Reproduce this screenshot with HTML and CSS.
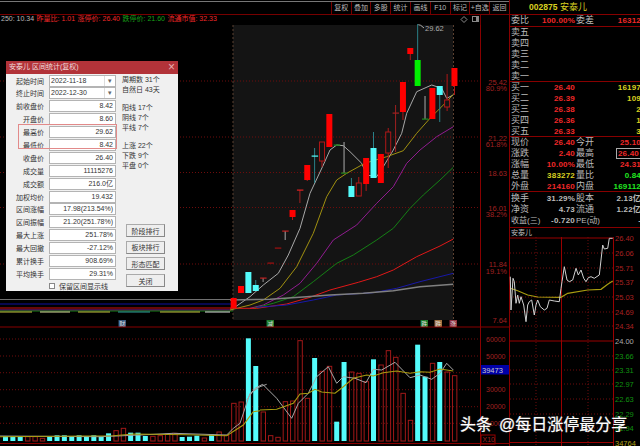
FILE: index.html
```html
<!DOCTYPE html>
<html lang="zh-CN">
<head>
  <meta charset="UTF-8">
  <title>安泰儿 002875</title>
  <link rel="stylesheet" href="styles.css">
</head>
<body>
  <div class="screen">
    <div class="left">
      <div class="toolbar">
        <span>复权</span><span>叠加</span><span>多股</span><span>统计</span><span>画线</span><span>F10</span><span>标记</span><span>+自选</span><span>返回</span>
      </div>
      <div class="info">
        <span class="gray">250: 10.34</span>
        <span class="red">昨量比: 1.01</span>
        <span class="red">涨停价: 26.40</span>
        <span class="green">跌停价: 21.60</span>
        <span class="red">流通市值: 32.33</span>
      </div>
      <svg id="kline" class="kline" viewBox="0 25 509 421" width="509" height="421"></svg>
    </div>

    <div class="quote">
      <div class="stock"><b>002875</b> 安泰儿</div>
      <div class="block one">
        <div class="row"><i>委比</i><b class="red">100.00%</b><i>委差</i><b class="red">16312</b></div>
      </div>
      <div class="block">
        <div class="row"><i>卖五</i></div>
        <div class="row"><i>卖四</i></div>
        <div class="row"><i>卖三</i></div>
        <div class="row"><i>卖二</i></div>
        <div class="row"><i>卖一</i></div>
      </div>
      <div class="block">
        <div class="row"><i>买一</i><b class="red">26.40</b><i></i><b class="yellow">16197</b></div>
        <div class="row"><i>买二</i><b class="red">26.39</b><i></i><b class="yellow">109</b></div>
        <div class="row"><i>买三</i><b class="red">26.38</b><i></i><b class="yellow">2</b></div>
        <div class="row"><i>买四</i><b class="red">26.36</b><i></i><b class="yellow">1</b></div>
        <div class="row"><i>买五</i><b class="red">26.33</b><i></i><b class="yellow">3</b></div>
      </div>
      <div class="block">
        <div class="row"><i>现价</i><b class="red">26.40</b><i>今开</i><b class="red">25.10</b></div>
        <div class="row"><i>涨跌</i><b class="red">2.40</b><i>最高</i><b class="red"><span class="boxed">26.40</span></b></div>
        <div class="row"><i>涨幅</i><b class="red">10.00%</b><i>最低</i><b class="red">24.31</b></div>
        <div class="row"><i>总量</i><b class="yellow">383272</b><i>量比</i><b class="lime">0.84</b></div>
        <div class="row"><i>外盘</i><b class="red">214160</b><i>内盘</i><b class="lime">169112</b></div>
      </div>
      <div class="block three">
        <div class="row"><i>换手</i><b>31.29%</b><i>股本</i><b>2.13亿</b></div>
        <div class="row"><i>净资</i><b>4.73</b><i>流通</i><b>1.22亿</b></div>
        <div class="row wide"><i>收益(三)</i><b>-0.720</b><i>PE(动)</i><b>-</b></div>
      </div>
      <div class="minute-title">安泰儿</div>
      <svg id="minute" class="minute" viewBox="509 237 131 209" width="131" height="209"></svg>
    </div>

    <div class="dialog">
      <div class="dialog-title"><span>安泰儿 区间统计(复权)</span><span class="close">×</span></div>
      <div class="dialog-body">
        <div class="form">
          <div class="field"><label>起始时间</label><div class="value date">2022-11-18<em>▾</em></div></div>
          <div class="field"><label>终止时间</label><div class="value date">2022-12-30<em>▾</em></div></div>
          <div class="field"><label>前收盘价</label><div class="value">8.42</div></div>
          <div class="field"><label>开盘价</label><div class="value">8.60</div></div>
          <div class="field"><label>最高价</label><div class="value">29.62</div></div>
          <div class="field"><label>最低价</label><div class="value">8.42</div></div>
          <div class="field"><label>收盘价</label><div class="value">26.40</div></div>
          <div class="field"><label>成交量</label><div class="value">11115276</div></div>
          <div class="field"><label>成交额</label><div class="value">216.0亿</div></div>
          <div class="field"><label>加权均价</label><div class="value">19.432</div></div>
          <div class="field"><label>区间涨幅</label><div class="value">17.98(213.54%)</div></div>
          <div class="field"><label>区间振幅</label><div class="value">21.20(251.78%)</div></div>
          <div class="field"><label>最大上涨</label><div class="value">251.78%</div></div>
          <div class="field"><label>最大回撤</label><div class="value">-27.12%</div></div>
          <div class="field"><label>累计换手</label><div class="value">908.69%</div></div>
          <div class="field"><label>平均换手</label><div class="value">29.31%</div></div>
          <div class="keep"><span class="check"></span>保留区间显示线</div>
        </div>
        <div class="side">
          <div class="stats"><p>周期数 31个</p><p>自然日 43天</p></div>
          <div class="stats"><p>阳线 17个</p><p>阴线 7个</p><p>平线 7个</p></div>
          <div class="stats"><p>上涨 22个</p><p>下跌 9个</p><p>平盘 0个</p></div>
          <div class="buttons">
            <button>阶段排行</button>
            <button>板块排行</button>
            <button>形态匹配</button>
            <button>关闭</button>
          </div>
        </div>
      </div>
      <div class="highlight"></div>
    </div>

    <div class="watermark">头条 @每日涨停最分享</div>
  </div>
  <script src="chart.js"></script>
</body>
</html>
```

FILE: styles.css
```css
* { box-sizing: border-box; }
html, body { margin: 0; background: #000; }
body { font-family: "Liberation Sans", "Noto Sans CJK SC", sans-serif; font-size: 10px; color: #bbb; }
svg { display: block; overflow: visible; }
svg text { font-family: "Liberation Sans", "Noto Sans CJK SC", sans-serif; }

.screen { position: relative; width: 640px; height: 446px; overflow: hidden; display: grid; grid-template-columns: 509px 131px; }
.red { color: #f02828; }
.green { color: #18a018; }
.gray { color: #b8b8b8; }
.yellow { color: #d8d020; }
.lime { color: #20e820; }

.toolbar { height: 14px; margin-top: 1px; border-top: 1px solid #777; border-bottom: 1px solid #700; display: flex; justify-content: flex-end; }
.toolbar span { width: 19.8px; line-height: 11px; text-align: center; border-left: 1px solid #700; font-size: 7px; white-space: nowrap; overflow: hidden; }
.info { height: 10px; width: 481px; border-right: 1px solid #700; padding-left: 1px; display: flex; gap: 2.5px; line-height: 8px; font-size: 7px; white-space: nowrap; }

.quote { border-left: 1px solid #800; display: flex; flex-direction: column; min-height: 0; }
.stock { height: 15px; padding: 2px 0 0 19px; line-height: 11px; color: #d8d020; border-bottom: 1px solid #800; font-size: 9px; }
.stock b { font-size: 8.5px; }
.block { height: 55px; border-bottom: 1px solid #800; }
.block.one { height: 12px; }
.block.three { height: 36px; padding-top: 1px; }
.row { height: 11px; line-height: 11px; display: grid; grid-template-columns: 19px 46px 20px 46px; white-space: nowrap; overflow: hidden; font-size: 8px; }
.row.wide { grid-template-columns: 28px 37px 20px 46px; }
.row i { font-style: normal; padding-left: 1px; font-size: 9px; color: #bbb; }
.row.wide i { font-size: 8px; }
.row b { text-align: right; letter-spacing: 0.2px; }
.boxed { border: 1px solid #aaa; padding: 0 1px; }
.minute-title { height: 9px; line-height: 9px; font-size: 7px; padding-left: 1px; }

.dialog { position: absolute; left: 6px; top: 61px; width: 172px; height: 230px; background: #f0f0f0; color: #333; }
.dialog-title { height: 13px; background: #b23339; color: #f0dcdc; padding: 0 3px; line-height: 12px; font-size: 7px; display: flex; justify-content: space-between; }
.close { font-size: 12px; color: #e8b0b0; }
.dialog-body { display: flex; }
.form { width: 110px; padding-top: 0.5px; display: flex; flex-direction: column; gap: 0.9px; }
.field { height: 12px; display: flex; align-items: center; }
.field label { width: 38px; margin-right: 5px; text-align: right; font-size: 7px; white-space: nowrap; }
.value { width: 67px; height: 12px; background: #fff; border: 1px solid #b4b4b4; line-height: 10px; text-align: right; padding-right: 2px; font-size: 7px; white-space: nowrap; }
.value.date { display: flex; justify-content: space-between; padding: 0 0 0 1px; }
.value em { width: 11px; border-left: 1px solid #ddd; font-style: normal; text-align: center; color: #666; font-size: 7px; }
.keep { height: 12px; margin: -1px 0 0 43px; display: flex; align-items: center; gap: 4px; font-size: 7px; white-space: nowrap; }
.check { width: 6px; height: 6px; background: #fff; border: 1px solid #888; flex: none; }
.side { margin-left: 6px; display: flex; flex-direction: column; font-size: 7px; flex: 1; }
.stats { margin-bottom: 8.8px; }
.stats:first-child { padding-top: 1px; }
.stats p { margin: 0; line-height: 9.7px; white-space: nowrap; }
.buttons { margin: 45px 0 0 4px; display: flex; flex-direction: column; gap: 3.7px; }
.buttons button { width: 39px; height: 13px; padding: 0; font: inherit; color: #333; background: #eee; border: 1px solid #aaa; border-bottom-color: #888; border-right-color: #888; }
.highlight { position: absolute; left: 12px; top: 63px; width: 99px; height: 25px; border: 1px solid #e28a8a; }

.watermark { position: absolute; left: 460px; top: 415px; font-size: 16px; line-height: 20px; word-spacing: 2.5px; color: #fff; white-space: nowrap; text-shadow: 0 0 2px #333; -webkit-text-stroke: 0.2px #fff; }
```

FILE: chart.js
```js
// k-line, volume and minute chart
const RED = '#ff0000', CYAN = '#54fcfc', TEAL = '#2a8088', DIM = '#6e0c0c', AXIS = '#a02020';
const barX = i => 5.5 + i * 7.36;

function line(x1, y1, x2, y2, color, extra) {
  return `<line x1="${x1}" y1="${y1}" x2="${x2}" y2="${y2}" stroke="${color}" ${extra || ''}/>`;
}
function rect(x, y, w, h, fill, stroke) {
  return `<rect x="${x}" y="${y}" width="${w}" height="${h}" fill="${fill}" stroke="${stroke || 'none'}"/>`;
}
function text(x, y, s, color, size, anchor) {
  return `<text x="${x}" y="${y}" fill="${color}" font-size="${size || 7}" text-anchor="${anchor || 'start'}">${s}</text>`;
}
// points were read off at 3x, ox/oy is where that crop started
function poly(pts, ox, oy, color, w) {
  const p = pts.map(a => `${(ox + a[0] / 3).toFixed(1)},${(oy + a[1] / 3).toFixed(1)}`).join(' ');
  return `<polyline points="${p}" fill="none" stroke="${color}" stroke-width="${w || 1}"/>`;
}

// index, type, high, low, top, bottom
// r filled red, h hollow red, c cyan, g green
const candles = [
  [31, 'r', 298, 308, 298, 308], [32, 'r', 286, 293, 286, 293], [33, 'c', 272, 293, 272, 293],
  [34, 'c', 280, 291, 285, 291], [39, 'r', 210, 220, 210, 217], [41, 'r', 165, 181, 165, 180],
  [43, 'h', 142, 167, 142, 161], [44, 'r', 114, 147, 114, 147], [47, 'c', 178, 197, 186, 197],
  [48, 'h', 177, 196, 183, 196], [49, 'r', 158, 191, 158, 184], [50, 'c', 132, 178, 148, 178],
  [51, 'r', 154, 183, 154, 183], [52, 'h', 128, 168, 132, 153], [54, 'r', 82, 120, 82, 112],
  [55, 'r', 48, 60, 48, 54], [56, 'g', 24, 86, 60, 86], [58, 'r', 88, 119, 88, 119],
  [59, 'c', 86, 122, 86, 95], [60, 'h', 74, 111, 100, 107], [61, 'r', 68, 95, 68, 86]
];
// index, y, bar colour, stem end, stem colour
const ticks = [
  [35, 278, '#c02020', 282, '#999'], [36, 263, '#a01010'], [37, 248, '#a01010'],
  [38, 231, '#c02020', 240, '#aaa'], [40, 190, '#e02020', 203, '#a02020'],
  [42, 156, CYAN, 183, TEAL, 148], [45, 145, '#1c8c1c'], [46, 173, '#1c8c1c', 142, '#aaa'],
  [53, 113, '#a02020', 152, '#a02020', 105], [57, 119, '#1c8c1c', 96, '#aaa']
];

const ma = [
  ['#a8a8a8', [[10,925],[60,890],[100,855],[145,820],[175,765],[210,685],[240,580],[280,495],[300,450],[320,435],[340,437],[360,455],[395,490],[410,525],[440,530],[460,500],[490,450],[515,400],[530,340],[560,275],[605,255],[635,265],[650,295],[670,285]]],
  ['#a09010', [[0,930],[60,915],[100,900],[150,865],[200,800],[250,700],[290,590],[320,540],[350,520],[395,495],[420,485],[470,470],[520,452],[560,400],[600,355],[630,325],[650,305],[670,283]]],
  ['#901c90', [[60,925],[100,915],[160,885],[210,850],[260,790],[310,720],[380,675],[440,610],[490,560],[530,490],[570,450],[620,410],[670,380]]],
  ['#148014', [[70,925],[130,910],[190,890],[250,845],[320,790],[370,765],[440,720],[490,685],[540,625],[580,585],[630,540],[670,502]]],
  ['#e01818', [[0,925],[80,925],[170,912],[240,892],[300,870],[385,847],[440,830],[490,810],[560,770],[630,738],[670,717]]],
  ['#1818a8', [[80,922],[170,915],[250,900],[320,885],[430,878],[500,865],[570,845],[670,820]]],
  ['#808080', [[0,900],[120,898],[230,890],[300,885],[400,880],[490,872],[570,860],[670,853]]]
];

const vols = [
  348,350,350,350,350,355,351,346,346,351,346,350,346,350,340,332,325,338,338,348,349,347,342,340,351,350,347,354,344,336,346,250,246,55,138,
  276,347,352,245,243,62,235,114,154,139,305,126,156,160,185,118,135,92,112,220,301,74,170,130,126,156,167
];
const cyanBars = new Set([0,1,2,6,7,8,9,10,11,12,13,14,17,18,19,24,25,26,28,33,34,42,45,46,50,56,57,59]);

function klineSvg() {
  let s = '';
  s += rect(233, 25, 220, 295, '#141414');
  [81, 137, 172.5, 207.5, 264].forEach(y => { s += line(0, y, 480, y, DIM, 'stroke-dasharray="1 2"'); });
  s += line(233, 25, 233, 320, '#5a4030', 'stroke-dasharray="2 2"');
  s += line(453.5, 25, 453.5, 320, '#5a4030', 'stroke-dasharray="2 2"');

  // lines that run on under the dialog
  s += line(0, 299.5, 233, 299.5, '#707070');
  s += line(0, 304, 233, 304, '#1010a0');
  s += line(0, 308, 233, 308, '#d01010');
  s += line(0, 310, 233, 310, '#901c90');
  s += line(0, 311, 233, 311, '#148014');
  [[0, 32, '#c8c040'], [40, 70, '#e0e0a0'], [78, 110, '#c8c040'], [118, 150, '#30a0a0'], [160, 200, '#c8c040'], [205, 230, '#e0e0e0']].forEach(g => {
    s += line(g[0], 312, g[1], 312, g[2]);
  });
  ma.forEach(m => { s += poly(m[1], 230, 0, m[0], m[0] === '#808080' ? 1.5 : 1); });

  candles.forEach(c => {
    const x = barX(c[0]), col = c[1] === 'c' ? CYAN : c[1] === 'g' ? '#00f000' : RED;
    const wick = c[1] === 'c' || c[1] === 'g' ? TEAL : '#b01818';
    s += line(x, c[2], x, c[3], wick);
    if (c[1] === 'h') s += rect(x - 2.5, c[4], 5, c[5] - c[4], '#141414', '#b01818');
    else s += rect(x - 3, c[4], 6, c[5] - c[4], col);
  });
  ticks.forEach(t => {
    const x = barX(t[0]);
    if (t[3]) s += line(x, t[5] || t[1], x, t[3], t[4]);
    s += rect(x - 3, t[1] - 0.5, 6.5, 1.2, t[2]);
  });

  s += poly([[565,74],[572,76],[582,84]], 230, 0, '#aaa');
  s += text(425, 31, '29.62', '#aaa', 7.5);
  s += `<path d="M464 16.5l3 3-3 3-3-3z" fill="none" stroke="#888"/>`;
  s += rect(472.5, 16.5, 6, 5, 'none', '#888') + rect(476, 16.5, 2.5, 5, '#888');

  // marks under the candles
  [[122, '财', '#3a5a80'], [270, '减', '#1c7c2c'], [424, '跌', '#1c7c2c'], [438, '跌', '#a07040'], [453, '涨', '#903040']].forEach(m => {
    s += rect(m[0] - 3.5, 320, 7.5, 7, m[2]);
    s += text(m[0] + 0.2, 326, m[1], '#ddd', 6, 'middle');
  });

  // right axis
  [[84.5, '25.42', 91, '80.9%'], [140.5, '21.22', 147, '61.8%'], [175.5, '18.63'], [210.5, '16.01', 217, '38.2%'], [267, '11.84', 273.5, '19.1%'], [323, '7.64']].forEach(a => {
    s += text(507, a[0], a[1], AXIS, 7.5, 'end');
    if (a[2]) s += text(507, a[2], a[3], AXIS, 7.5, 'end');
  });
  s += line(480.5, 25, 480.5, 446, '#800');
  s += line(0, 327, 509, 327, '#800');

  // volume
  [339, 356, 372.7, 389.7, 406.7, 423.3].forEach((y, i) => {
    s += line(0, y, 480, y, DIM, 'stroke-dasharray="1 2"');
    if (i !== 2) s += text(486, y + 2.5, (60000 - i * 10000), AXIS, 7);
  });
  vols.forEach((v, i) => {
    const x = 3 + i * 7.36, top = 320 + v / 3;
    if (cyanBars.has(i)) s += rect(x, top, 5, 441 - top, CYAN);
    else s += rect(x + 0.5, top, 4.4, 441 - top, 'none', '#a01818');
  });
  s += poly([[0,348],[300,350],[420,345],[520,340],[680,345],[700,325],[720,310],[750,220],[780,200],[800,193]], 0, 320, '#a0a0a0');
  s += poly([[20,240],[45,205],[68,193],[110,235],[155,295],[175,250],[205,220],[230,170],[265,140],[290,190],[310,170],[345,175],[378,188],[400,148],[425,150],[465,127],[510,173],[540,165],[575,178],[600,160],[620,130],[640,150]], 240, 320, '#a8a8a8');
  s += poly([[0,350],[340,347],[400,342],[560,344],[680,347],[730,315],[760,275],[780,272]], 0, 320, '#a89c10', 1.1);
  s += poly([[60,270],[110,268],[160,250],[180,222],[205,220],[225,208],[245,216],[285,220],[310,200],[340,175],[380,165],[400,168],[430,158],[470,153],[510,160],[540,155],[570,157],[600,147],[640,153]], 240, 320, '#a89c10', 1.1);

  s += rect(481, 365, 28, 9.5, '#0000a8');
  s += text(482, 372.5, '39473', '#c8c8c8', 7.5);
  s += rect(481, 435, 14, 9, 'none', '#900');
  s += text(482.5, 442, 'X10', AXIS, 7);
  s += line(0, 443.5, 509, 443.5, '#800');
  return s;
}

function minuteSvg() {
  let s = '';
  const rows = [['26.40', 238], ['26.06', 253], ['25.71', 268], ['25.37', 282], ['25.03', 297], ['24.69', 312], ['24.34', 326], ['24.00', 341], ['23.66', 356], ['23.31', 370], ['22.97', 384], ['22.63', 399], ['22.29', 414], ['21.94', 428]];
  rows.forEach((r, i) => {
    const strong = r[0] === '26.40' || r[0] === '24.00';
    s += line(509, r[1], 612, r[1], strong ? '#900' : DIM, strong ? '' : 'stroke-dasharray="1 2"');
    const col = r[0] === '24.00' ? '#aaa' : i < 7 ? '#a82020' : '#109010';
    s += text(614, r[1] + 2.5, r[0], col, 7.5);
  });
  s += text(614, 445.5, '34764', '#b0a018', 7.5);
  s += line(509, 442.5, 612, 442.5, '#900');
  [535, 587].forEach(x => { s += line(x, 237, x, 446, DIM, 'stroke-dasharray="1 2"'); });
  s += line(560.5, 237, 560.5, 446, '#900');
  s += line(612.5, 237, 612.5, 446, '#900');
  s += poly([[28,190],[50,197],[80,210],[110,216],[180,217],[200,205],[260,195],[300,193],[320,178],[335,168]], 500, 225, '#a89c10', 1.2);
  s += poly([[28,155],[30,255],[36,160],[40,170],[45,235],[50,210],[55,235],[60,215],[68,240],[75,290],[80,240],[85,230],[92,225],[100,270],[105,240],[110,225],[118,245],[130,255],[138,250],[145,225],[160,228],[175,230],[180,190],[183,170],[190,125],[198,165],[205,170],[215,165],[225,130],[232,150],[240,135],[248,160],[255,170],[262,158],[270,155],[280,160],[295,150],[300,105],[305,60],[310,72],[320,70],[325,40],[335,40]], 500, 225, '#d0d0d0', 1);
  return s;
}

document.getElementById('kline').innerHTML = klineSvg();
document.getElementById('minute').innerHTML = minuteSvg();
```
